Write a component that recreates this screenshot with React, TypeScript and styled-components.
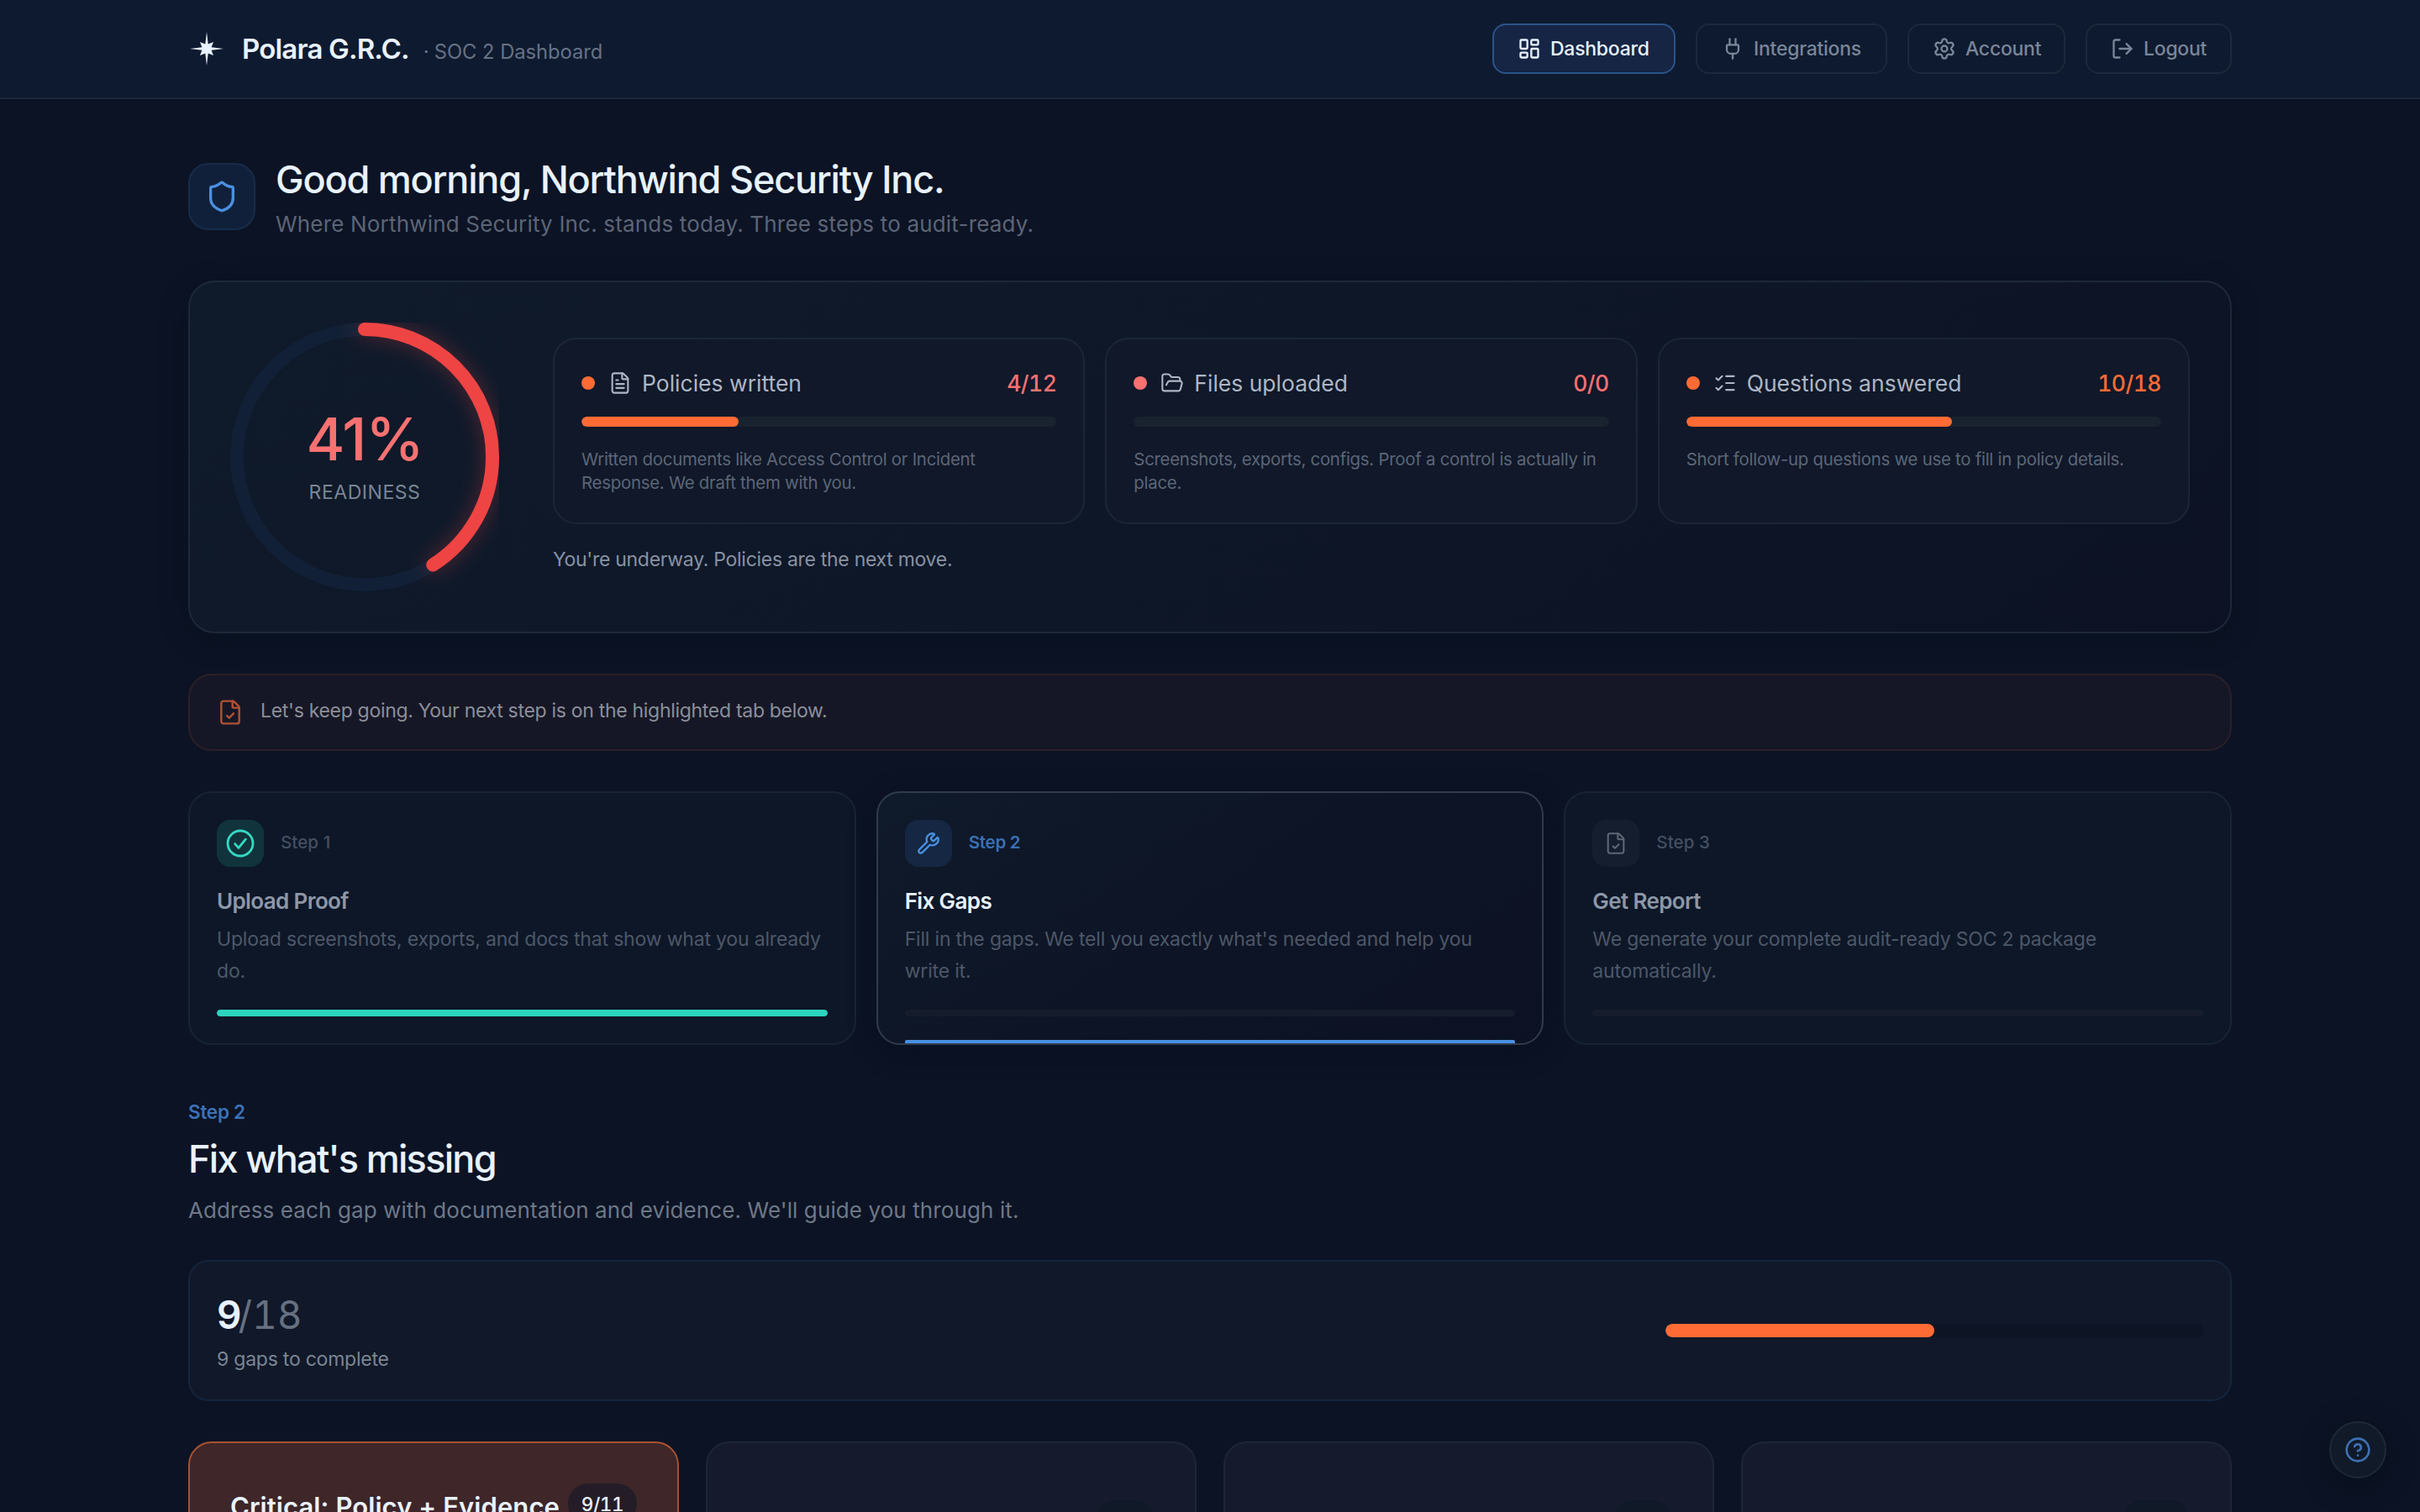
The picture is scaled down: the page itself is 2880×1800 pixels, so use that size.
import React from "react";
import styled, { createGlobalStyle, css } from "styled-components";
import {
  CircleHelp,
  FileCheck,
  FileText,
  FolderOpen,
  LayoutDashboard,
  ListChecks,
  LogOut,
  Plug,
  Settings,
  Shield,
  Wrench,
} from "lucide-react";

const color = {
  page: "#0c1324",
  header: "#0e1a2f",
  line: "#1d2838",
  ice: "#e8f2ff",
  blue: "#4a90e2",
  orange: "#ff6b35",
  coral: "#f87171",
  red: "#ef4444",
  teal: "#2dd4bf",
};

const GlobalStyle = createGlobalStyle`
  * { box-sizing: border-box; }
  body {
    margin: 0;
    background: ${color.page};
    color: ${color.ice};
    font-family: Inter, "Liberation Sans", sans-serif;
    -webkit-font-smoothing: antialiased;
  }
  h1, h2, h3, p { margin: 0; font-weight: inherit; }
`;

const Page = styled.div`
  height: 1800px;
  overflow: hidden;
`;

const Header = styled.header`
  height: 118px;
  padding: 0 224px;
  display: flex;
  align-items: center;
  justify-content: space-between;
  background: ${color.header};
  border-bottom: 2px solid #1a283b;
`;

const Brand = styled.div`
  display: flex;
  align-items: center;
  gap: 20px;
`;

const BrandText = styled.div`
  margin-top: 3px;
  display: flex;
  align-items: baseline;
  line-height: 44px;
`;

const BrandName = styled.span`
  font-size: 33px;
  font-weight: 600;
  letter-spacing: -0.82px;
`;

const BrandDot = styled.span`
  margin-left: 17px;
  width: 13px;
  font-size: 24px;
  color: #6b778b;
`;

const BrandSub = styled.span`
  font-size: 23.7px;
  color: #667286;
`;

const Nav = styled.nav`
  display: flex;
  gap: 24px;
`;

const NavButton = styled.a<{ $width: number; $active?: boolean }>`
  width: ${(p) => p.$width}px;
  height: 60px;
  padding-left: 28px;
  display: flex;
  align-items: center;
  gap: 11px;
  border: 2px solid ${(p) => (p.$active ? "#2a5488" : "#1c293b")};
  border-radius: 16px;
  background: ${(p) => (p.$active ? "#162544" : "transparent")};
  color: ${(p) => (p.$active ? color.ice : "#7a8698")};
  font-size: 23px;
  font-weight: 500;
  letter-spacing: -0.26px;
`;

const Main = styled.main`
  padding: 70px 224px 0;
  display: flex;
  flex-direction: column;
`;

const Greeting = styled.section`
  display: flex;
  gap: 24px;
  height: 96px;
`;

const GreetingIcon = styled.div`
  width: 80px;
  height: 80px;
  margin-top: 6px;
  display: grid;
  place-items: center;
  border: 2px solid #162c4a;
  border-radius: 24px;
  background: #11203a;
  color: ${color.blue};
`;

const Title = styled.h1`
  font-size: 45px;
  font-weight: 500;
  line-height: 52px;
  letter-spacing: -1.2px;
`;

const GreetingSub = styled.p`
  margin-top: 10px;
  font-size: 26px;
  line-height: 34px;
  letter-spacing: 0.18px;
  color: #5c6577;
`;

const Overview = styled.section`
  height: 420px;
  margin-top: 50px;
  padding: 48px;
  display: flex;
  gap: 64px;
  border: 2px solid ${color.line};
  border-radius: 32px;
  background: linear-gradient(145deg, #0f1a2a 0%, #0e1728 50%, #0c1224 100%);
  box-shadow: 0 8px 32px rgba(2, 14, 28, 0.4);
`;

const RingWrap = styled.div`
  width: 320px;
  height: 320px;
  flex: none;
  display: grid;
  place-items: center;
  & > * {
    grid-area: 1 / 1;
  }
`;

const RingArc = styled.circle`
  filter: drop-shadow(0 0 12px rgba(239, 68, 68, 0.35));
`;

const RingLabel = styled.div`
  display: flex;
  flex-direction: column;
  align-items: center;
  gap: 12px;
`;

const RingValue = styled.span`
  font-size: 70px;
  font-weight: 500;
  line-height: 72px;
  letter-spacing: -1.2px;
  color: ${color.coral};
`;

const RingCaption = styled.span`
  font-size: 23px;
  line-height: 30px;
  letter-spacing: 0.54px;
  color: #7b8593;
`;

const Stats = styled.div`
  flex: 1;
  padding-top: 18px;
`;

const StatGrid = styled.div`
  display: grid;
  grid-template-columns: repeat(3, 1fr);
  gap: 24px;
`;

const StatCard = styled.article`
  height: 222px;
  padding: 32px;
  border: 2px solid #1b2636;
  border-radius: 28px;
  background: #101829;
`;

const StatHead = styled.div`
  height: 40px;
  display: flex;
  align-items: center;
  font-size: 26.5px;
  color: #adb6c4;
`;

const Dot = styled.span<{ $color: string }>`
  width: 16px;
  height: 16px;
  margin-right: 16px;
  border-radius: 50%;
  background: ${(p) => p.$color};
`;

const StatName = styled.span`
  margin-left: 12px;
`;

const StatCount = styled.span<{ $color: string }>`
  margin-left: auto;
  font-weight: 500;
  font-variant-numeric: tabular-nums;
  letter-spacing: -0.55px;
  color: ${(p) => p.$color};
`;

const Track = styled.div<{ $height: number; $bg: string; $top?: number; $width?: number }>`
  height: ${(p) => p.$height}px;
  width: ${(p) => (p.$width ? `${p.$width}px` : "auto")};
  margin-top: ${(p) => p.$top ?? 0}px;
  border-radius: 999px;
  background: ${(p) => p.$bg};
  overflow: hidden;
`;

const Fill = styled.div<{ $color: string; $percent: number }>`
  width: ${(p) => p.$percent}%;
  height: 100%;
  border-radius: inherit;
  background: ${(p) => p.$color};
`;

const StatText = styled.p`
  margin-top: 25px;
  font-size: 20.4px;
  line-height: 28px;
  letter-spacing: -0.26px;
  color: #5c6677;
`;

const StatsNote = styled.p`
  margin-top: 24px;
  font-size: 23px;
  line-height: 36px;
  letter-spacing: -0.29px;
  color: #8992a2;
`;

const Banner = styled.section`
  height: 92px;
  margin-top: 48px;
  padding: 0 32px;
  display: flex;
  align-items: center;
  gap: 20px;
  border: 2px solid #2b2028;
  border-radius: 28px;
  background: #161726;
  color: #b25131;
`;

const BannerText = styled.p`
  margin-bottom: 4px;
  font-size: 23px;
  line-height: 34px;
  letter-spacing: -0.3px;
  color: #8b8f9a;
`;

const Steps = styled.section`
  margin-top: 48px;
  display: grid;
  grid-template-columns: repeat(3, 1fr);
  gap: 24px;
`;

const StepCard = styled.article<{ $active?: boolean }>`
  position: relative;
  height: 302px;
  padding: 32px;
  border: 2px solid #182434;
  border-radius: 28px;
  background: #0d1728;
  ${(p) =>
    p.$active &&
    css`
      border-color: #303b4c;
      background: linear-gradient(145deg, #0f1a2a 0%, #0d1425 55%, #0c1224 100%);
      box-shadow: 0 8px 32px rgba(2, 14, 28, 0.45);
      &::after {
        content: "";
        position: absolute;
        left: 32px;
        right: 32px;
        bottom: 0;
        height: 4px;
        border-radius: 2px 2px 0 0;
        background: ${color.blue};
      }
    `}
`;

const StepHead = styled.div`
  display: flex;
  align-items: center;
  gap: 20px;
`;

const StepIcon = styled.div<{ $bg: string; $fg: string }>`
  width: 56px;
  height: 56px;
  display: grid;
  place-items: center;
  border-radius: 16px;
  background: ${(p) => p.$bg};
  color: ${(p) => p.$fg};
`;

const StepNumber = styled.span<{ $active?: boolean }>`
  margin-bottom: 2px;
  font-size: 20.5px;
  font-weight: ${(p) => (p.$active ? 600 : 500)};
  line-height: 28px;
  letter-spacing: ${(p) => (p.$active ? -0.25 : 0.1)}px;
  color: ${(p) => (p.$active ? "#3a70b3" : "#454f60")};
`;

const StepTitle = styled.h3<{ $active?: boolean }>`
  margin-top: 23px;
  font-size: 26px;
  font-weight: 600;
  line-height: 36px;
  letter-spacing: -0.62px;
  color: ${(p) => (p.$active ? color.ice : "#8e97a6")};
`;

const StepText = styled.p`
  margin-top: 8px;
  height: 76px;
  font-size: 23px;
  line-height: 38px;
  letter-spacing: -0.18px;
  color: #4d5767;
`;

const SectionStep = styled.p`
  margin-top: 64px;
  font-size: 22.5px;
  font-weight: 600;
  line-height: 32px;
  letter-spacing: -0.25px;
  color: #3b72b7;
`;

const SectionTitle = styled.h2`
  margin-top: 14px;
  font-size: 45px;
  font-weight: 500;
  line-height: 52px;
  letter-spacing: -1.7px;
`;

const SectionText = styled.p`
  margin-top: 17px;
  font-size: 26px;
  line-height: 36px;
  letter-spacing: 0.1px;
  color: #6e7888;
`;

const GapCard = styled.section`
  height: 168px;
  margin-top: 41px;
  padding: 0 32px;
  display: flex;
  align-items: center;
  justify-content: space-between;
  border: 2px solid #14253c;
  border-radius: 24px;
  background: #101829;
`;

const GapCount = styled.p`
  margin-top: 5px;
  font-size: 46px;
  font-weight: 600;
  line-height: 54px;
  letter-spacing: -4px;
`;

const GapTotal = styled.span`
  font-weight: 400;
  font-variant-numeric: tabular-nums;
  letter-spacing: -0.1px;
  color: #667080;
`;

const GapText = styled.p`
  margin-top: 9px;
  font-size: 23px;
  line-height: 34px;
  letter-spacing: -0.23px;
  color: #7c8594;
`;

const Tiles = styled.section`
  margin-top: 48px;
  display: grid;
  grid-template-columns: repeat(4, 1fr);
  gap: 32px;
`;

const Tile = styled.article<{ $hot?: boolean }>`
  height: 260px;
  padding: 48px;
  display: flex;
  justify-content: space-between;
  align-items: flex-start;
  border: 2px solid ${(p) => (p.$hot ? "#a9522f" : "#1d2636")};
  border-radius: 28px;
  background: ${(p) => (p.$hot ? "#3e2629" : "#151b2c")};
`;

const TileTitle = styled.h3`
  margin-top: 4px;
  font-size: 31px;
  font-weight: 600;
  line-height: 48px;
  letter-spacing: 0.08px;
  white-space: nowrap;
`;

const TileBadge = styled.span`
  width: 82px;
  height: 48px;
  display: grid;
  place-items: center;
  border-radius: 24px;
  background: #241d27;
  font-size: 22.5px;
  font-weight: 500;
  font-variant-numeric: tabular-nums;
  letter-spacing: -0.4px;
`;

const EmptyBadge = styled.span<{ $width: number }>`
  width: ${(p) => p.$width}px;
  height: 48px;
  margin: 20px 0 0 auto;
  border-radius: 24px;
  background: #101927;
`;

const HelpButton = styled.button`
  position: fixed;
  right: 40px;
  bottom: 40px;
  width: 68px;
  height: 68px;
  padding: 0;
  display: grid;
  place-items: center;
  border: 2px solid #1e2938;
  border-radius: 50%;
  background: #101a29;
  color: #3d70b2;
  box-shadow: 0 8px 32px rgba(2, 14, 24, 0.5);
`;

const StarMark = () => (
  <svg width="44" height="44" viewBox="-22 -22 44 44" fill={color.ice}>
    <path d="M0-20 1.7-5.6 8-8 5.6-1.7 20 0 5.6 1.7 8 8 1.7 5.6 0 20-1.7 5.6-8 8-5.6 1.7-20 0-5.6-1.7-8-8-1.7-5.6Z" />
  </svg>
);

const DoneIcon = () => (
  <svg
    width="36"
    height="36"
    viewBox="0 0 24 24"
    fill="none"
    stroke="currentColor"
    strokeWidth="1.9"
    strokeLinecap="round"
    strokeLinejoin="round"
  >
    <circle cx="12" cy="12" r="10" />
    <path d="M7.8 12.4 10.6 15.6 16.2 8.8" />
  </svg>
);

const Ring = ({ percent }: { percent: number }) => {
  const length = 2 * Math.PI * 152;
  return (
    <svg width="320" height="320" viewBox="0 0 320 320" fill="none" strokeWidth="16">
      <circle cx="160" cy="160" r="152" stroke="#112036" />
      <RingArc
        cx="160"
        cy="160"
        r="152"
        stroke={color.red}
        strokeLinecap="round"
        strokeDasharray={`${(length * percent) / 100} ${length}`}
        transform="rotate(-90 160 160)"
      />
    </svg>
  );
};

const nav = [
  { label: "Dashboard", Icon: LayoutDashboard, width: 218, active: true },
  { label: "Integrations", Icon: Plug, width: 228 },
  { label: "Account", Icon: Settings, width: 188 },
  { label: "Logout", Icon: LogOut, width: 174 },
];

const stats = [
  {
    label: "Policies written",
    Icon: FileText,
    count: "4/12",
    percent: 33,
    dot: color.orange,
    tone: color.coral,
    text: "Written documents like Access Control or Incident Response. We draft them with you.",
  },
  {
    label: "Files uploaded",
    Icon: FolderOpen,
    count: "0/0",
    percent: 0,
    dot: color.coral,
    tone: color.coral,
    text: "Screenshots, exports, configs. Proof a control is actually in place.",
  },
  {
    label: "Questions answered",
    Icon: ListChecks,
    count: "10/18",
    percent: 56,
    dot: color.orange,
    tone: color.orange,
    text: "Short follow-up questions we use to fill in policy details.",
  },
];

const steps = [
  {
    step: "Step 1",
    title: "Upload Proof",
    text: "Upload screenshots, exports, and docs that show what you already do.",
    icon: <DoneIcon />,
    bg: "#10333c",
    fg: "#35d8c2",
    percent: 100,
  },
  {
    step: "Step 2",
    title: "Fix Gaps",
    text: "Fill in the gaps. We tell you exactly what's needed and help you write it.",
    icon: <Wrench size={28} strokeWidth={2} />,
    bg: "#152742",
    fg: color.blue,
    percent: 0,
    active: true,
  },
  {
    step: "Step 3",
    title: "Get Report",
    text: "We generate your complete audit-ready SOC 2 package automatically.",
    icon: <FileCheck size={28} strokeWidth={1.75} />,
    bg: "#141e2e",
    fg: "#5d6776",
    percent: 0,
  },
];

export default function App() {
  return (
    <Page>
      <GlobalStyle />
      <Header>
        <Brand>
          <StarMark />
          <BrandText>
            <BrandName>Polara G.R.C.</BrandName>
            <BrandDot>·</BrandDot>
            <BrandSub>SOC 2 Dashboard</BrandSub>
          </BrandText>
        </Brand>
        <Nav>
          {nav.map(({ label, Icon, width, active }) => (
            <NavButton key={label} $width={width} $active={active}>
              <Icon size={28} strokeWidth={2} />
              {label}
            </NavButton>
          ))}
        </Nav>
      </Header>

      <Main>
        <Greeting>
          <GreetingIcon>
            <Shield size={40} strokeWidth={2} />
          </GreetingIcon>
          <div>
            <Title>Good morning, Northwind Security Inc.</Title>
            <GreetingSub>
              Where Northwind Security Inc. stands today. Three steps to audit-ready.
            </GreetingSub>
          </div>
        </Greeting>

        <Overview>
          <RingWrap>
            <Ring percent={41} />
            <RingLabel>
              <RingValue>41%</RingValue>
              <RingCaption>READINESS</RingCaption>
            </RingLabel>
          </RingWrap>
          <Stats>
            <StatGrid>
              {stats.map(({ label, Icon, count, percent, dot, tone, text }) => (
                <StatCard key={label}>
                  <StatHead>
                    <Dot $color={dot} />
                    <Icon size={28} strokeWidth={1.8} />
                    <StatName>{label}</StatName>
                    <StatCount $color={tone}>{count}</StatCount>
                  </StatHead>
                  <Track $height={12} $bg="#19222f" $top={20}>
                    <Fill $color={color.orange} $percent={percent} />
                  </Track>
                  <StatText>{text}</StatText>
                </StatCard>
              ))}
            </StatGrid>
            <StatsNote>You're underway. Policies are the next move.</StatsNote>
          </Stats>
        </Overview>

        <Banner>
          <FileCheck size={32} strokeWidth={1.8} />
          <BannerText>Let's keep going. Your next step is on the highlighted tab below.</BannerText>
        </Banner>

        <Steps>
          {steps.map((s) => (
            <StepCard key={s.step} $active={s.active}>
              <StepHead>
                <StepIcon $bg={s.bg} $fg={s.fg}>
                  {s.icon}
                </StepIcon>
                <StepNumber $active={s.active}>{s.step}</StepNumber>
              </StepHead>
              <StepTitle $active={s.active}>{s.title}</StepTitle>
              <StepText>{s.text}</StepText>
              <Track $height={8} $bg="#151d2c" $top={27}>
                <Fill $color={color.teal} $percent={s.percent} />
              </Track>
            </StepCard>
          ))}
        </Steps>

        <SectionStep>Step 2</SectionStep>
        <SectionTitle>Fix what's missing</SectionTitle>
        <SectionText>
          Address each gap with documentation and evidence. We'll guide you through it.
        </SectionText>

        <GapCard>
          <div>
            <GapCount>
              9<GapTotal>/18</GapTotal>
            </GapCount>
            <GapText>9 gaps to complete</GapText>
          </div>
          <Track $height={16} $bg="#0d1424" $width={640}>
            <Fill $color={color.orange} $percent={50} />
          </Track>
        </GapCard>

        <Tiles>
          <Tile $hot>
            <TileTitle>Critical: Policy + Evidence</TileTitle>
            <TileBadge>9/11</TileBadge>
          </Tile>
          <Tile>
            <EmptyBadge $width={70} />
          </Tile>
          <Tile>
            <EmptyBadge $width={70} />
          </Tile>
          <Tile>
            <EmptyBadge $width={80} />
          </Tile>
        </Tiles>
      </Main>

      <HelpButton aria-label="Help">
        <CircleHelp size={32} strokeWidth={2} />
      </HelpButton>
    </Page>
  );
}
